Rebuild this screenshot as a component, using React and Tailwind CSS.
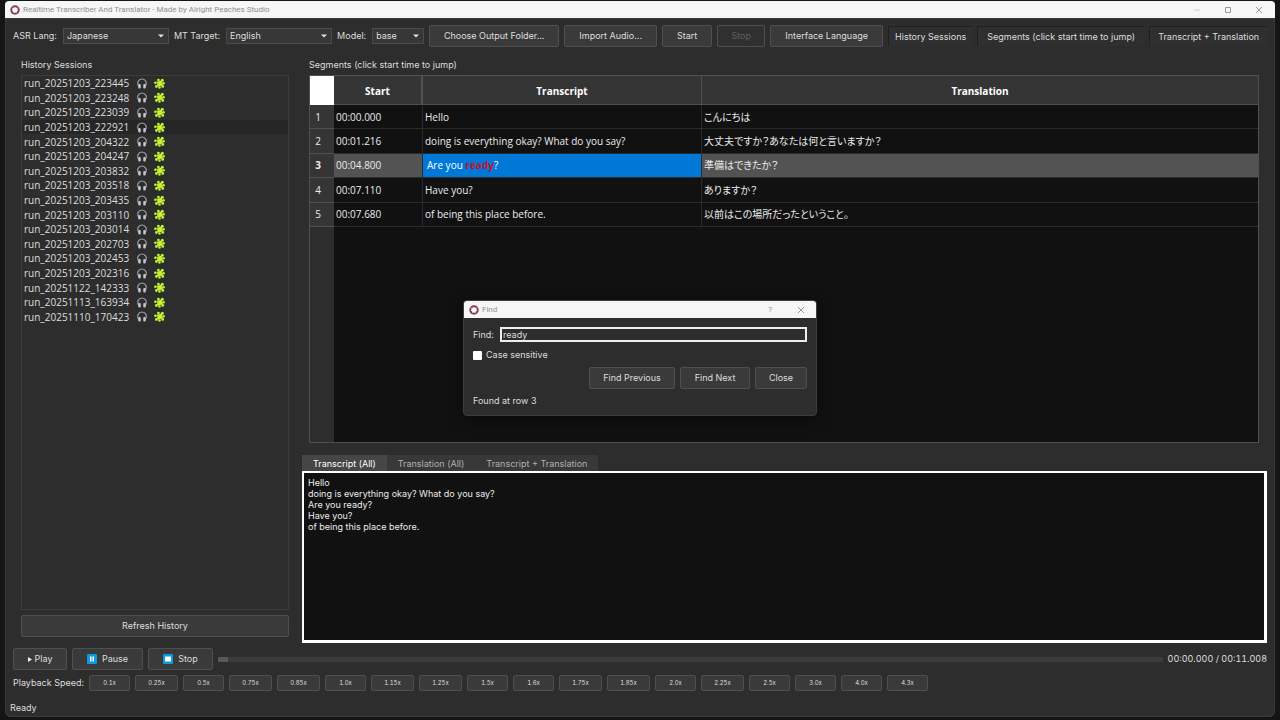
import { useState } from 'react'
import clsx from 'clsx'

const SESSIONS = [
  'run_20251203_223445',
  'run_20251203_223248',
  'run_20251203_223039',
  'run_20251203_222921',
  'run_20251203_204322',
  'run_20251203_204247',
  'run_20251203_203832',
  'run_20251203_203518',
  'run_20251203_203435',
  'run_20251203_203110',
  'run_20251203_203014',
  'run_20251203_202703',
  'run_20251203_202453',
  'run_20251203_202316',
  'run_20251122_142333',
  'run_20251113_163934',
  'run_20251110_170423'
]

const SEGMENTS = [
  { start: '00:00.000', text: 'Hello', translation: 'こんにちは' },
  {
    start: '00:01.216',
    text: 'doing is everything okay? What do you say?',
    translation: '大丈夫ですか？あなたは何と言いますか？'
  },
  { start: '00:04.800', text: 'Are you ready?', translation: '準備はできたか？' },
  { start: '00:07.110', text: 'Have you?', translation: 'ありますか？' },
  {
    start: '00:07.680',
    text: 'of being this place before.',
    translation: '以前はこの場所だったということ。'
  }
]

const SPEEDS = [
  '0.1x', '0.25x', '0.5x', '0.75x', '0.85x', '1.0x', '1.15x', '1.25x', '1.5x',
  '1.6x', '1.75x', '1.85x', '2.0x', '2.25x', '2.5x', '3.0x', '4.0x', '4.3x'
]

const TABS = ['Transcript (All)', 'Translation (All)', 'Transcript + Translation']

const AppLogo = () => (
  <svg viewBox="0 0 20 20" className="h-[10px] w-[10px] shrink-0" aria-hidden="true">
    <circle cx="10" cy="10" r="9.5" fill="#83415a" />
    <path
      d="M10 3.800 12.200 5.600 15.400 5.600 14.800 8.600 16.400 10.800 14 12.400 13.400 15.600 10 15 6.600 15.600 6 12.400 3.600 10.800 5.200 8.600 4.600 5.600 7.800 5.600Z"
      fill="#fff"
    />
  </svg>
)

const Headphones = () => (
  <svg viewBox="0 0 20 22" className="h-[11px] w-[10px]" fill="none" aria-hidden="true">
    <path d="M3.500 17C-1 9 3 2 10 2s11 7 6.500 15" stroke="#a2a2a8" strokeWidth="2.400" />
    <rect x="2.500" y="12" width="5" height="9" rx="2" fill="#c4c4cc" />
    <rect x="12.500" y="12" width="5" height="9" rx="2" fill="#c4c4cc" />
  </svg>
)

const Puzzle = () => (
  <svg viewBox="0 0 22 22" className="h-[11px] w-[11px]" fill="#c6f135" aria-hidden="true">
    <path d="M5.500 7.500 15.500 5 18 14.500 8.500 17.500Z" />
    <circle cx="8.800" cy="4" r="2.700" />
    <circle cx="16.500" cy="4.500" r="3" />
    <circle cx="19.300" cy="10.500" r="2.400" />
    <circle cx="17.500" cy="16.800" r="2.800" />
    <circle cx="11" cy="18.800" r="2.500" />
    <circle cx="4.800" cy="17" r="2.800" />
    <circle cx="2.900" cy="9.500" r="2.700" />
    <path d="M6.500 12h4v4h-4z" />
  </svg>
)

const Button = ({ className, children, ...rest }) => (
  <button
    type="button"
    className={clsx(
      'flex h-[22px] shrink-0 items-center justify-center rounded-xs border border-[#4f4f4f] bg-[#3a3a3a] whitespace-nowrap',
      className
    )}
    {...rest}
  >
    {children}
  </button>
)

const ToolSelect = ({ id, label, options, className }) => (
  <div className="flex items-center gap-[6px]">
    <label htmlFor={id} className="whitespace-nowrap">{label}</label>
    <div className={clsx('relative flex', className)}>
      <select
        id={id}
        className="h-[16px] w-full appearance-none border border-[#4c4c4c] bg-[#373737] pl-[3px] leading-[14px] outline-none"
      >
        {options.map((option) => (
          <option key={option}>{option}</option>
        ))}
      </select>
      <svg
        viewBox="0 0 6 4"
        className="pointer-events-none absolute top-[6px] right-[5px] h-[4px] w-[6px]"
        aria-hidden="true"
      >
        <path d="M0 .5h6L3 3.500Z" fill="#e4e4e4" />
      </svg>
    </div>
  </div>
)

const PanelToggle = ({ className, children }) => (
  <button
    type="button"
    className={clsx(
      'h-[20px] shrink-0 border-t border-l border-[#202020] bg-[#2f2f2f] whitespace-nowrap',
      className
    )}
  >
    {children}
  </button>
)

const TitleBar = () => (
  <header className="flex h-[17px] shrink-0 items-center rounded-t bg-[#f6f6f6] pr-3 pl-[5px] font-[Roboto,sans-serif] text-[8px] text-[#8f8f8f]">
    <AppLogo />
    <h1 className="ml-[3px] flex-1">
      Realtime Transcriber And Translator - Made by Alright Peaches Studio
    </h1>
    <div className="flex items-center gap-[23px]">
      <button type="button" aria-label="Minimize">
        <svg viewBox="0 0 8 8" className="h-2 w-2"><path d="M1 4h6" stroke="#ccc" /></svg>
      </button>
      <button type="button" aria-label="Maximize">
        <svg viewBox="0 0 8 8" className="h-2 w-2" fill="none"><path d="M1.500 1.500h5v5h-5z" stroke="#999" /></svg>
      </button>
      <button type="button" aria-label="Close window">
        <svg viewBox="0 0 8 8" className="h-2 w-2"><path d="m1 1 6 6M7 1 1 7" stroke="#999" /></svg>
      </button>
    </div>
  </header>
)

const Toolbar = () => (
  <div className="flex items-center gap-[5px] pt-[7px] pr-2 pl-2">
    <ToolSelect id="asr" label="ASR Lang:" options={['Japanese', 'English']} className="w-[106px]" />
    <ToolSelect id="mt" label="MT Target:" options={['English', 'Japanese']} className="w-[106px]" />
    <ToolSelect id="model" label="Model:" options={['base', 'small']} className="w-[52px]" />
    <Button className="w-[130px]">Choose Output Folder...</Button>
    <Button className="w-[93px]">Import Audio...</Button>
    <Button className="w-[50px]">Start</Button>
    <Button className="w-[48px] bg-[#303030] text-[#5f5f5f]" disabled>Stop</Button>
    <Button className="w-[113px]">Interface Language</Button>
    <PanelToggle className="w-[84px]">History Sessions</PanelToggle>
    <PanelToggle className="w-[167px]">Segments (click start time to jump)</PanelToggle>
    <PanelToggle className="w-[118px]">Transcript + Translation</PanelToggle>
  </div>
)

const HistoryPanel = () => (
  <section className="mb-[6px] ml-4 flex w-[268px] shrink-0 flex-col">
    <h2 className="mb-[3px] leading-[14px]">History Sessions</h2>
    <div className="flex-1 border border-[#3c3c3c]">
      <ul className="flex h-[248px] flex-col font-['Open_Sans','Noto_Sans',sans-serif] text-[10px]">
        {SESSIONS.map((name, i) => (
          <li
            key={name}
            className={clsx('flex flex-1 items-center pl-[2px] leading-[14px]', i === 3 && 'bg-[#262626]')}
          >
            <span className="w-[113px]">{name}</span>
            <Headphones />
            <span className="ml-[7px]"><Puzzle /></span>
          </li>
        ))}
      </ul>
    </div>
    <Button className="mt-[5px]">Refresh History</Button>
  </section>
)

const SegmentTable = () => (
  <div className="flex min-h-0 flex-1 flex-col border border-[#505050] bg-[#111]">
    <table className="h-[151px] w-full table-fixed border-separate border-spacing-0 font-['Open_Sans','Noto_Sans','Noto_Sans_CJK_JP',sans-serif] text-[10px] text-[#ececec]">
      <colgroup>
        <col className="w-[24px]" />
        <col className="w-[89px]" />
        <col className="w-[279px]" />
        <col />
      </colgroup>
      <thead className="text-white">
        <tr className="h-[29px] bg-[#353535]">
          <td className="bg-white" />
          <th className="border-r-2 border-b border-[#505050] pt-[2px]">Start</th>
          <th className="border-r border-b border-[#505050] pt-[2px]">Transcript</th>
          <th className="border-b border-[#505050] pt-[2px]">Translation</th>
        </tr>
      </thead>
      <tbody>
        {SEGMENTS.map((seg, i) => {
          const active = i === 2
          return (
            <tr key={seg.start} className={active ? 'bg-[#535353]' : ''}>
              <th
                className={clsx(
                  'border-b border-[#505050] bg-[#353535] pr-2',
                  active ? 'font-bold' : 'font-normal'
                )}
              >
                {i + 1}
              </th>
              <td className="border-r border-b border-[#2b2b2b] pl-[2px]">{seg.start}</td>
              <td
                className={clsx(
                  'border-r border-b border-[#2b2b2b]',
                  active ? 'bg-[#0078d7] pl-[4px] text-white' : 'pl-[2px]'
                )}
              >
                {active ? (
                  <>Are you <mark className="bg-transparent font-bold text-[#c8102e]">ready</mark>?</>
                ) : (
                  seg.text
                )}
              </td>
              <td lang="ja" className="border-b border-[#2b2b2b] pl-[2px] [font-feature-settings:'palt']">
                {seg.translation}
              </td>
            </tr>
          )
        })}
      </tbody>
    </table>
    <div className="w-[24px] flex-1 bg-[#2d2d2d]" />
  </div>
)

const TextTabs = () => {
  const [selected, setSelected] = useState(0)
  const lines = SEGMENTS.map((seg) => {
    if (selected === 0) return seg.text
    if (selected === 1) return seg.translation
    return `${seg.text}\n${seg.translation}`
  })

  return (
    <div className="mt-[12px] flex h-[188px] shrink-0 flex-col">
      <div role="tablist" className="flex h-[16px] shrink-0">
        {TABS.map((tab, i) => (
          <button
            key={tab}
            type="button"
            role="tab"
            aria-selected={selected === i}
            onClick={() => setSelected(i)}
            className={clsx(
              'px-[11px] pt-px',
              selected === i ? 'bg-[#464646] text-white' : 'bg-[#383838] text-[#b0b0b0]'
            )}
          >
            {tab}
          </button>
        ))}
      </div>
      <textarea
        readOnly
        aria-label="Transcript text"
        value={lines.join('\n')}
        className="w-full flex-1 resize-none border-2 border-r-3 border-b-3 border-white bg-[#111] px-[4px] py-[4px] leading-[11px] text-[#ececec] outline-none"
      />
    </div>
  )
}

const PlaybackBar = () => (
  <div className="mt-[5px] flex items-center gap-[5px] px-2">
    <Button className="w-[54px] gap-[3px]">
      <svg viewBox="0 0 4 5" className="h-[5px] w-[4px]"><path d="M0 0 4 2.500 0 5Z" fill="#eee" /></svg>
      Play
    </Button>
    <Button className="w-[71px] gap-[5px]">
      <svg viewBox="0 0 10 10" className="h-[10px] w-[10px]">
        <rect width="10" height="10" rx="1" fill="#0d9be0" />
        <path d="M3 2.500h1.500v5H3zM5.500 2.500H7v5H5.500z" fill="#fff" />
      </svg>
      Pause
    </Button>
    <Button className="w-[65px] gap-[5px]">
      <svg viewBox="0 0 10 10" className="h-[10px] w-[10px]">
        <rect width="10" height="10" rx="1" fill="#0d9be0" />
        <path d="M2 2.500h6v5H2z" fill="#fff" />
      </svg>
      Stop
    </Button>
    <input
      type="range"
      aria-label="Playback position"
      min="0"
      max="11008"
      defaultValue="0"
      className="h-[5px] min-w-0 flex-1 appearance-none bg-[#3b3b3b] [&::-webkit-slider-thumb]:h-[5px] [&::-webkit-slider-thumb]:w-[10px] [&::-webkit-slider-thumb]:appearance-none [&::-webkit-slider-thumb]:bg-[#585858]"
    />
    <span className="whitespace-nowrap tabular-nums">00:00.000 / 00:11.008</span>
  </div>
)

const SpeedBar = () => (
  <div className="mt-[5px] flex items-center gap-[5px] px-2">
    <span className="w-[71px] whitespace-nowrap">Playback Speed:</span>
    {SPEEDS.map((speed) => (
      <button
        key={speed}
        type="button"
        className={clsx(
          'h-[16px] rounded-xs border border-[#4f4f4f] bg-[#3a3a3a] text-[6px] tabular-nums',
          speed.length > 4 ? 'w-[43px]' : 'w-[41px]'
        )}
      >
        {speed}
      </button>
    ))}
  </div>
)

const FindDialog = () => (
  <div
    role="dialog"
    aria-label="Find"
    className="absolute top-[300px] left-1/2 w-[354px] -translate-x-1/2 overflow-hidden rounded border border-[#3d3d3d] bg-[#2d2d2d] shadow-[0_4px_16px_rgba(0,0,0,0.5)]"
  >
    <div className="flex h-[17px] items-center bg-[#f6f6f6] pr-[11px] pl-[5px] font-[Roboto,sans-serif] text-[8px] text-[#8f8f8f]">
      <AppLogo />
      <span className="ml-[3px] flex-1">Find</span>
      <button type="button" className="mr-[25px]">?</button>
      <button type="button" aria-label="Close dialog">
        <svg viewBox="0 0 8 8" className="h-2 w-2"><path d="m1 1 6 6M7 1 1 7" stroke="#999" /></svg>
      </button>
    </div>
    <div className="px-[9px] pt-[9px] pb-[7px]">
      <div className="flex items-center">
        <label htmlFor="find" className="w-[27px]">Find:</label>
        <input
          id="find"
          type="text"
          defaultValue="ready"
          className="h-[15px] min-w-0 flex-1 border-2 border-[#eee] bg-[#2d2d2d] px-px outline-none"
        />
      </div>
      <label className="mt-[6px] flex h-[14px] items-center gap-[4px]">
        <input type="checkbox" className="h-[9px] w-[9px] appearance-none rounded-[1px] bg-white checked:bg-[#0078d7]" />
        Case sensitive
      </label>
      <div className="mt-[5px] flex justify-end gap-[5px]">
        <Button className="w-[86px]">Find Previous</Button>
        <Button className="w-[70px]">Find Next</Button>
        <Button className="w-[52px]">Close</Button>
      </div>
      <p className="mt-[5px] leading-[14px]">Found at row 3</p>
    </div>
  </div>
)

const App = () => {
  return (
    <div className="flex h-screen flex-col bg-[#151515] pt-px pr-[5px] pb-[3px] pl-[5px] font-[Inter,'Noto_Sans','Noto_Sans_CJK_JP',sans-serif] text-[9px] leading-[14px] text-[#dedede]">
      <TitleBar />
      <div className="flex min-h-0 flex-1 flex-col rounded-b-md bg-[#2d2d2d] shadow-[inset_0_0_0_1px_#3a3a3a]">
        <Toolbar />
        <main className="mt-[11px] flex min-h-0 flex-1 pr-2">
          <HistoryPanel />
          <section className="ml-[13px] flex min-w-0 flex-1 flex-col">
            <div className="mr-[8px] ml-[7px] flex min-h-0 flex-1 flex-col">
              <h2 className="mb-[3px] leading-[14px]">Segments (click start time to jump)</h2>
              <SegmentTable />
            </div>
            <TextTabs />
          </section>
        </main>
        <PlaybackBar />
        <SpeedBar />
        <footer className="mt-[10px] pb-[2px] pl-[5px] leading-[14px]">Ready</footer>
      </div>
      <FindDialog />
    </div>
  )
}

export default App
